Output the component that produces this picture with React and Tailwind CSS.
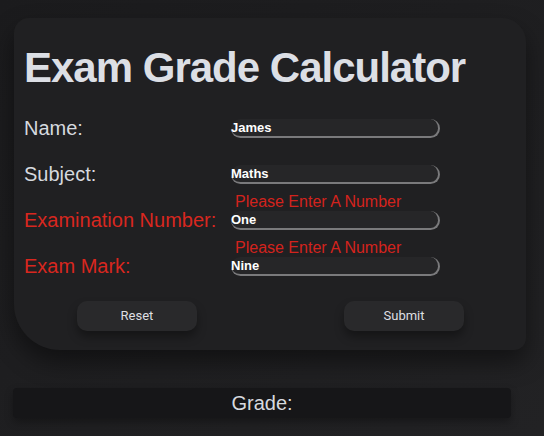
import React from 'react';

// ─── Fila del formulario ─────────────────────────────────────────────────────
const Field = ({ label, value, error }) => (
    <div className="flex h-[46px] items-end">
        <div className={`w-[207px] text-[20px] leading-[19px] ${error ? 'text-[#d8271f]' : 'text-[#d6d9df]'}`}>
            {label}
        </div>
        <div className="flex w-[209px] flex-col">
            {error && (
                <div className="pl-[4px] text-[16px] leading-[18px] text-[#d3231d]">{error}</div>
            )}
            <div className="h-[19px] rounded-[10px] border-b-2 border-r-2 border-[#7a7a7c] bg-[#262628] text-[13px] font-bold leading-[17px] text-white">
                {value}
            </div>
        </div>
    </div>
);

const App = () => {
    return (
        <div className="min-h-[436px] bg-gradient-to-br from-[#1b1b1d] to-[#222224] pt-[18px] font-['Liberation_Sans',Arial,sans-serif]">
            {/* Tarjeta principal */}
            <div className="ml-[14px] w-[512px] rounded-tl-[15px] rounded-tr-[24px] rounded-br-[12px] rounded-bl-[46px] bg-[#202022] pl-[10px] pt-[26px] pb-[19px] shadow-[0_12px_24px_rgba(0,0,0,0.45)]">
                <h1 className="text-[42px] font-bold leading-[48px] tracking-[-1px] text-[#dcdfe5]">Exam Grade Calculator</h1>

                <Field label="Name:" value="James" />
                <Field label="Subject:" value="Maths" />
                <Field label="Examination Number:" value="One" error="Please Enter A Number" />
                <Field label="Exam Mark:" value="Nine" error="Please Enter A Number" />

                {/* Botones */}
                <div className="mt-[25px] flex justify-between pl-[53px] pr-[62px]">
                    <button className="h-[30px] w-[120px] rounded-[10px] bg-[#29292b] font-['Roboto',sans-serif] text-[13px] text-[#dedfe2] shadow-[0_6px_10px_rgba(0,0,0,0.35)]">
                        Reset
                    </button>
                    <button className="h-[30px] w-[120px] rounded-[10px] bg-[#29292b] font-['Roboto',sans-serif] text-[13px] text-[#dedfe2] shadow-[0_6px_10px_rgba(0,0,0,0.35)]">
                        Submit
                    </button>
                </div>
            </div>

            {/* Resultado */}
            <div className="ml-[13px] mt-[38px] flex h-[30px] w-[498px] items-center justify-center rounded-[4px] bg-[#161618] text-[20px] text-[#d6d9df] shadow-[0_4px_8px_rgba(0,0,0,0.3)]">
                Grade:
            </div>
        </div>
    );
};

export default App;
